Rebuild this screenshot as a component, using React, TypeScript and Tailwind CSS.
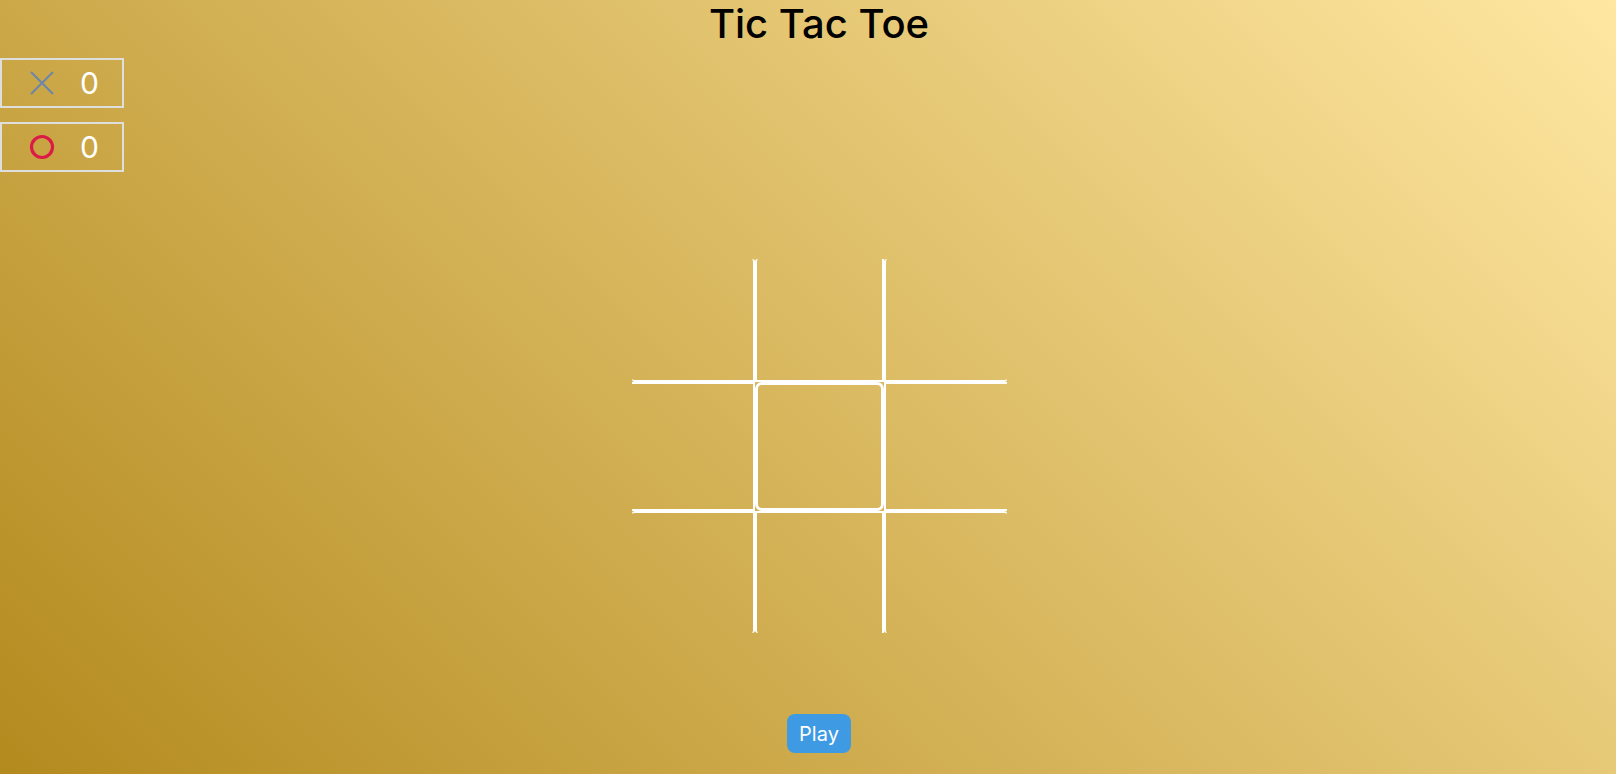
import React from "react";

const font = { fontFamily: "Inter, 'Noto Sans', sans-serif" };

function XMark() {
  return (
    <svg width="24" height="24" viewBox="0 0 24 24" aria-hidden="true">
      <path d="M1 1 L23 23 M23 1 L1 23" stroke="#6a86aa" strokeWidth="2" fill="none" />
    </svg>
  );
}

function OMark() {
  return (
    <svg width="26" height="26" viewBox="0 0 26 26" aria-hidden="true">
      <circle cx="13" cy="13" r="10.5" stroke="#dc1a48" strokeWidth="3.2" fill="none" />
    </svg>
  );
}

function ScoreBox({ mark, score }: { mark: React.ReactNode; score: number }) {
  return (
    <div className="flex h-[50px] w-[124px] items-center border-2 border-[#dedede]">
      <div className="flex w-[78px] justify-center pl-[2px]">{mark}</div>
      <span className="text-[30px] leading-none text-white">{score}</span>
    </div>
  );
}

const cells = [
  "border-t-0 border-l-0 rounded-tr-[3px] rounded-bl-[3px]",
  "border-t-0 rounded-tl-[3px]",
  "border-t-0 border-r-0 rounded-tl-[3px] rounded-br-[3px]",
  "border-l-0",
  "rounded-[7px] border-[3px]",
  "border-r-0",
  "border-b-0 border-l-0 rounded-tl-[3px] rounded-br-[3px]",
  "border-b-0 rounded-bl-[3px]",
  "border-b-0 border-r-0 rounded-tr-[3px] rounded-bl-[3px]",
];

export default function App() {
  return (
    <div
      className="relative h-[774px] w-full overflow-hidden bg-[linear-gradient(45deg,#b38a1e,#ffe7a2)]"
      style={font}
    >
      <div className="absolute left-0 top-[58px] flex flex-col gap-[14px]">
        <ScoreBox mark={<XMark />} score={0} />
        <ScoreBox mark={<OMark />} score={0} />
      </div>

      <div className="flex flex-col items-center pl-[22px]">
        <h1 className="pt-[2px] text-[40px] font-medium leading-[44px] text-black">Tic Tac Toe</h1>

        <div className="mt-[213px] grid grid-cols-[123px_129px_123px] grid-rows-[123px_129px_122px]">
          {cells.map((c, i) => (
            <button key={i} type="button" className={`border-2 border-white ${c}`} />
          ))}
        </div>

        <button
          type="button"
          className="mt-[81px] h-[39px] rounded-[8px] bg-[#3d9ae3] px-[12px] text-[20px] text-white"
        >
          Play
        </button>
      </div>
    </div>
  );
}
